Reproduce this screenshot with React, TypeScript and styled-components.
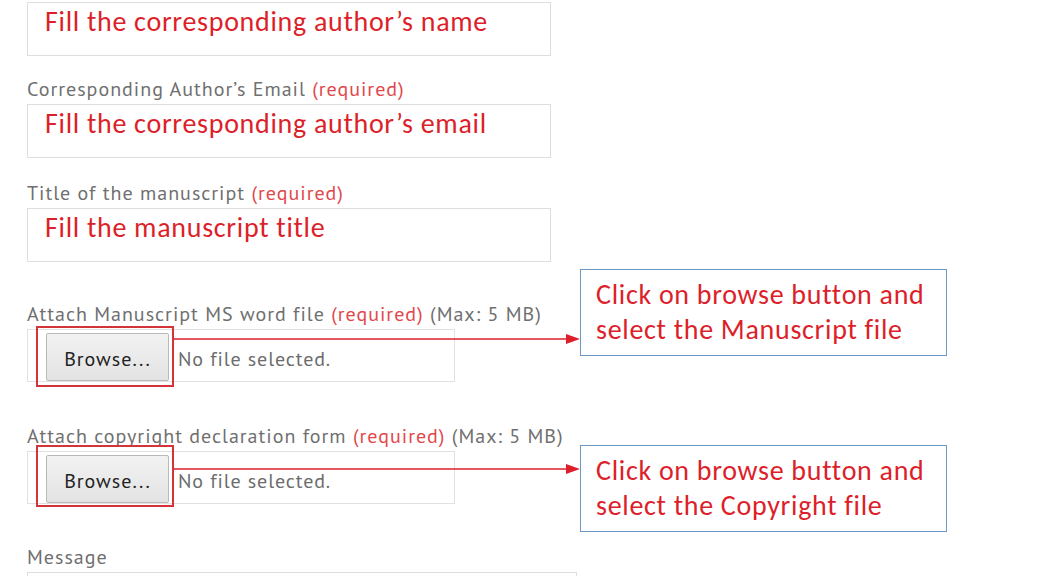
import React from 'react';
import styled, { createGlobalStyle } from 'styled-components';

const GlobalStyle = createGlobalStyle`
  html, body {
    margin: 0;
    padding: 0;
    background: #ffffff;
  }
`;

const LABEL_FONT = '"PT Sans", "Open Sans", Lato, sans-serif';
const NOTE_FONT = 'Carlito, Calibri, Lato, "Open Sans", sans-serif';
const NOTE_RED = '#dc1f2a';

interface FileNote {
  highlightTop: number;
  highlightHeight: number;
  arrowTop: number;
  calloutTop: number;
  lines: string[];
}

export default function App() {
  return (
    <S.Page>
      <GlobalStyle />
      <S.Form>
        <S.TextBox>
          <S.Hint>Fill the corresponding author’s name</S.Hint>
        </S.TextBox>

        <S.Label $space={23}>
          Corresponding Author’s Email <S.Required>(required)</S.Required>
        </S.Label>
        <S.TextBox>
          <S.Hint>Fill the corresponding author’s email</S.Hint>
        </S.TextBox>

        <S.Label $space={25}>
          Title of the manuscript <S.Required>(required)</S.Required>
        </S.Label>
        <S.TextBox>
          <S.Hint>Fill the manuscript title</S.Hint>
        </S.TextBox>

        <S.Label $space={42}>
          Attach Manuscript MS word file <S.Required>(required)</S.Required> (Max: 5 MB)
        </S.Label>
        <FileField
          note={{
            highlightTop: -3,
            highlightHeight: 61,
            arrowTop: 4,
            calloutTop: -60,
            lines: ['Click on browse button and', 'select the Manuscript file'],
          }}
        />

        <S.Label $space={44}>
          Attach copyright declaration form <S.Required>(required)</S.Required> (Max: 5 MB)
        </S.Label>
        <FileField
          note={{
            highlightTop: -6,
            highlightHeight: 62,
            arrowTop: 12,
            calloutTop: -6,
            lines: ['Click on browse button and', 'select the Copyright file'],
          }}
        />

        <S.Label $space={43}>Message</S.Label>
        <S.MessageBox />
      </S.Form>
    </S.Page>
  );
}

function FileField({ note }: { note: FileNote }) {
  return (
    <S.FileRow>
      <S.FileBox>
        <S.BrowseButton type="button">Browse...</S.BrowseButton>
        <S.NoFile>No file selected.</S.NoFile>
      </S.FileBox>
      <S.Highlight $top={note.highlightTop} $height={note.highlightHeight} />
      <S.Arrow $top={note.arrowTop} width="406" height="12" viewBox="0 0 406 12">
        <line x1="0" y1="6" x2="394" y2="6" stroke={NOTE_RED} strokeWidth="1.5" />
        <polygon points="392,1 406,6 392,11" fill={NOTE_RED} />
      </S.Arrow>
      <S.Callout $top={note.calloutTop}>
        {note.lines.map((line) => (
          <div key={line}>{line}</div>
        ))}
      </S.Callout>
    </S.FileRow>
  );
}

const S = {
  Page: styled.div`
    position: relative;
    width: 1038px;
    height: 576px;
    overflow: hidden;
    padding: 2px 0 0 27px;
    box-sizing: border-box;
    background: #ffffff;
  `,
  Form: styled.div`
    width: 524px;
    display: flex;
    flex-direction: column;
  `,
  Label: styled.div<{ $space: number }>`
    margin-top: ${(p) => p.$space}px;
    margin-bottom: 5px;
    height: 20px;
    line-height: 20px;
    font-family: ${LABEL_FONT};
    font-size: 20px;
    letter-spacing: 1px;
    color: #6f6f6f;
    white-space: nowrap;
  `,
  Required: styled.span`
    color: #e2474b;
  `,
  TextBox: styled.div`
    height: 54px;
    box-sizing: border-box;
    border: 1px solid #dedede;
    padding: 0 0 0 17px;
    display: flex;
    align-items: flex-start;
  `,
  Hint: styled.span`
    font-family: ${NOTE_FONT};
    font-size: 28px;
    letter-spacing: 0.7px;
    line-height: 37px;
    color: ${NOTE_RED};
    white-space: nowrap;
  `,
  FileRow: styled.div`
    position: relative;
    height: 53px;
  `,
  FileBox: styled.div`
    width: 428px;
    height: 53px;
    box-sizing: border-box;
    border: 1px solid #e1e1e1;
    padding: 3px 0 0 18px;
    display: flex;
    align-items: flex-start;
    gap: 9px;
  `,
  BrowseButton: styled.button`
    width: 123px;
    height: 48px;
    box-sizing: border-box;
    border: 1px solid #b9b9b9;
    border-radius: 2px;
    background: linear-gradient(#f2f2f2, #e3e3e3);
    font-family: ${LABEL_FONT};
    font-size: 20px;
    letter-spacing: 1px;
    color: #222222;
    padding: 4px 0 0;
  `,
  NoFile: styled.span`
    font-family: ${LABEL_FONT};
    font-size: 20px;
    letter-spacing: 0.9px;
    line-height: 52px;
    color: #6c6c6c;
  `,
  Highlight: styled.div<{ $top: number; $height: number }>`
    position: absolute;
    left: 9px;
    top: ${(p) => p.$top}px;
    width: 138px;
    height: ${(p) => p.$height}px;
    box-sizing: border-box;
    border: 2px solid #d3343a;
  `,
  Arrow: styled.svg<{ $top: number }>`
    position: absolute;
    left: 147px;
    top: ${(p) => p.$top}px;
    display: block;
  `,
  Callout: styled.div<{ $top: number }>`
    position: absolute;
    left: 553px;
    top: ${(p) => p.$top}px;
    width: 367px;
    height: 87px;
    box-sizing: border-box;
    border: 1.5px solid #6b98c4;
    padding: 7px 0 0 15px;
    font-family: ${NOTE_FONT};
    font-size: 28px;
    letter-spacing: 0.7px;
    line-height: 35px;
    color: ${NOTE_RED};
    white-space: nowrap;
    background: #ffffff;
  `,
  MessageBox: styled.div`
    width: 550px;
    height: 60px;
    box-sizing: border-box;
    border: 1px solid #dedede;
  `,
};
